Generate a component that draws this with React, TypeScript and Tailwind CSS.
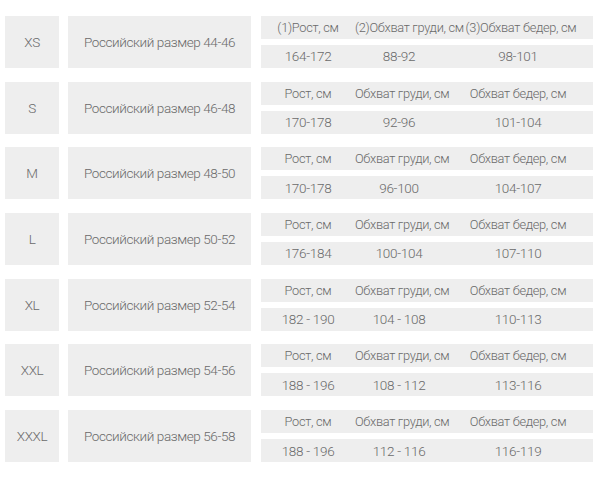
const sizes = [
  { code: "XS", ru: "44-46", h: "164-172", c: "88-92", b: "98-101", numbered: true },
  { code: "S", ru: "46-48", h: "170-178", c: "92-96", b: "101-104" },
  { code: "M", ru: "48-50", h: "170-178", c: "96-100", b: "104-107" },
  { code: "L", ru: "50-52", h: "176-184", c: "100-104", b: "107-110" },
  { code: "XL", ru: "52-54", h: "182 - 190", c: "104 - 108", b: "110-113" },
  { code: "XXL", ru: "54-56", h: "188 - 196", c: "108 - 112", b: "113-116" },
  { code: "XXXL", ru: "56-58", h: "188 - 196", c: "112 - 116", b: "116-119" },
];

const App = () => {
  return (
    <div
      className="w-[600px] h-[480px] bg-white text-[#6a6a6a] font-light pt-[16px] pl-[5px] flex flex-col gap-[13.7px] overflow-hidden"
      style={{ fontFamily: "Roboto, 'Open Sans', sans-serif" }}
    >
      {sizes.map((s) => (
        <div key={s.code} className="flex h-[52px]">
          <div className="w-[54px] bg-[#eeeeee] flex items-center justify-center text-[13.5px] tracking-[-0.4px]">
            {s.code}
          </div>
          <div className="w-[183px] ml-[9px] bg-[#eeeeee] flex items-center justify-center text-[13.5px] tracking-[-0.4px]">
            Российский размер {s.ru}
          </div>
          <div className="w-[332px] ml-[10px] flex flex-col gap-[6px] tracking-[-0.3px]">
            <div className="h-[23px] bg-[#eeeeee] flex items-center text-[12.8px]">
              <span className="w-[94px] text-center whitespace-nowrap">{s.numbered ? "(1)" : ""}Рост, см</span>
              <span className="w-[88px] text-center whitespace-nowrap">{s.numbered ? "(2)" : ""}Обхват груди, см</span>
              <span className={`w-[150px] text-center whitespace-nowrap ${s.numbered ? "pl-[6px]" : ""}`}>
                {s.numbered ? "(3)" : ""}Обхват бедер, см
              </span>
            </div>
            <div className="h-[23px] bg-[#eeeeee] flex items-center text-[13.5px]">
              <span className="w-[94px] text-center">{s.h}</span>
              <span className="w-[88px] text-center">{s.c}</span>
              <span className="w-[150px] text-center">{s.b}</span>
            </div>
          </div>
        </div>
      ))}
    </div>
  );
};

export default App;
